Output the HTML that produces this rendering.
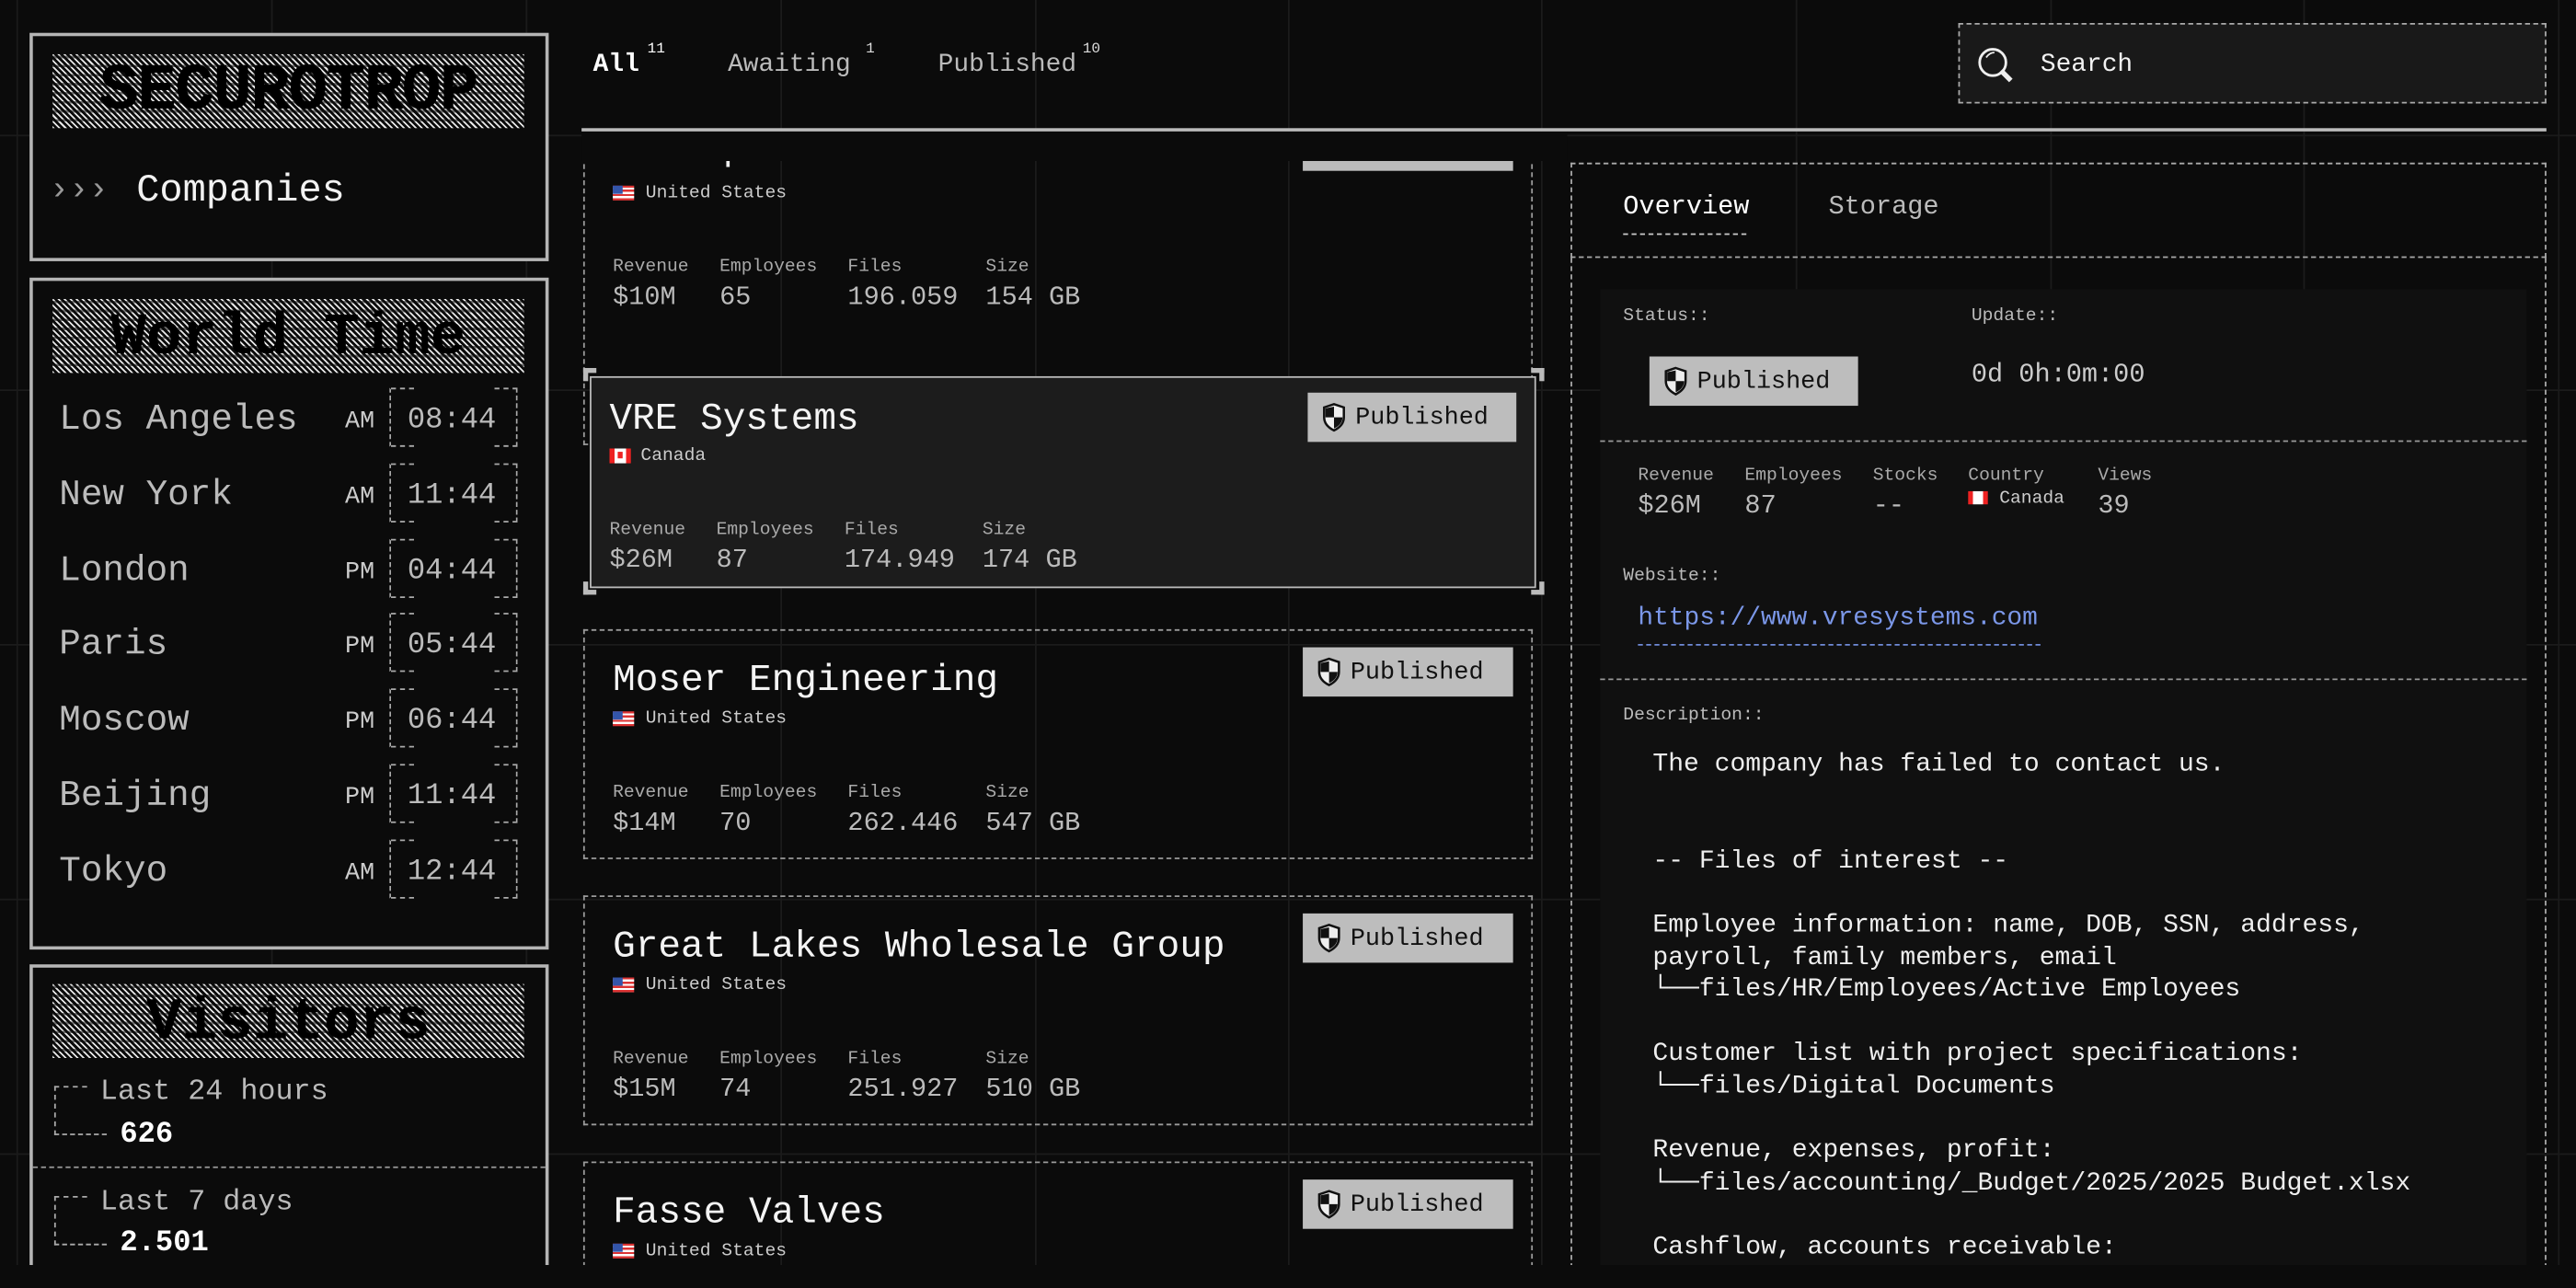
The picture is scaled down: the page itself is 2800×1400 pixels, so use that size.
<!DOCTYPE html>
<html><head><meta charset="utf-8">
<style>
*{margin:0;padding:0;box-sizing:border-box}
html,body{width:2800px;height:1400px;overflow:hidden;background:#0b0b0b}
#w{position:absolute;left:0;top:0;width:1568px;height:784px;transform:scale(1.785714);transform-origin:0 0;font-family:"Liberation Mono",monospace;color:#bbb;background:#0b0b0b;overflow:hidden}
.a{position:absolute;line-height:1;white-space:pre}
.a[style*="font-size"],.a.lab,.a.val{margin-top:2px}
.vl{position:absolute;top:0;width:1px;height:784px;background:#1b1b1b}
.hl{position:absolute;left:0;height:1px;width:1568px;background:#1b1b1b}
.box{position:absolute;border:2px solid #b5b5b5}
.ban{position:absolute;height:45px;background:
repeating-linear-gradient(0deg,transparent 0 4px,rgba(11,11,11,.55) 4px 5.5px),
repeating-linear-gradient(45deg,#e8e8e8 0 1px,#0b0b0b 1px 2.6px);display:flex;align-items:center;justify-content:center;color:#000;font-weight:bold;padding-top:2px}
.card{position:absolute;left:355px;width:578px;border:1px dashed #9a9a9a}
.badge{position:absolute;background:#bdbdbd;color:#111;font-size:15px;height:30px;display:flex;align-items:center;padding-left:9px;gap:6px}
.lab{font-size:11px;color:#aaa}
.val{font-size:16px;color:#bbb}
.tb{position:absolute;width:78px;height:36px;border:1px dashed #aaa;border-top-color:transparent;border-bottom-color:transparent}
.tb:before,.tb:after{content:"";position:absolute;left:0;right:0;height:0}
.tb:before{top:-1px;border-top:1px dashed #aaa;left:0;width:14px}
.tb:after{bottom:-1px;border-bottom:1px dashed #aaa;width:14px}
.tbr1,.tbr2{position:absolute;right:-1px;width:14px;height:0;border-top:1px dashed #aaa}
.tbr1{top:-1px}.tbr2{bottom:-1px}
.desc{font-size:15.7px;color:#eee}
</style></head><body><div id="w">
<!-- grid -->
<div class="vl" style="left:10px"></div><div class="vl" style="left:165px"></div><div class="vl" style="left:320px"></div><div class="vl" style="left:475px"></div><div class="vl" style="left:630px"></div><div class="vl" style="left:784px"></div><div class="vl" style="left:938px"></div><div class="vl" style="left:1093px"></div><div class="vl" style="left:1248px"></div><div class="vl" style="left:1402px"></div><div class="vl" style="left:1557px"></div>
<div class="hl" style="top:82px"></div><div class="hl" style="top:237px"></div><div class="hl" style="top:392px"></div><div class="hl" style="top:547px"></div><div class="hl" style="top:702px"></div>

<!-- logo box -->
<div class="box" style="left:18px;top:20px;width:316px;height:139px;background:#0b0b0b"></div>
<div class="ban" style="left:32px;top:33px;width:287px;font-size:40px;letter-spacing:-1px">SECUROTROP</div>
<div class="a" style="left:30px;top:105px;font-size:20px;color:#999">›››</div>
<div class="a" style="left:83px;top:103px;font-size:23.5px;color:#f2f2f2">Companies</div>

<!-- world time -->
<div class="box" style="left:18px;top:169px;width:316px;height:409px;background:#0b0b0b"></div>
<div class="ban" style="left:32px;top:182px;width:287px;font-size:36px">World Time</div>
<div id="wt"></div>

<!-- visitors -->
<div class="box" style="left:18px;top:587px;width:316px;height:210px;background:#0b0b0b"></div>
<div class="ban" style="left:32px;top:599px;width:287px;font-size:36px">Visitors</div>
<div class="a" style="left:33px;top:661px;width:20px;height:30px;border-left:1px dashed #aaa;border-top:1px dashed #aaa"></div>
<div class="a" style="left:33px;top:690px;width:32px;border-top:1px dashed #aaa"></div>
<div class="a" style="left:61px;top:655px;font-size:17.8px;color:#bbb">Last 24 hours</div>
<div class="a" style="left:73px;top:680px;font-size:18px;color:#fff;font-weight:bold">626</div>
<div class="a" style="left:20px;top:710px;width:312px;border-top:1px dashed #999"></div>
<div class="a" style="left:33px;top:728px;width:20px;height:30px;border-left:1px dashed #aaa;border-top:1px dashed #aaa"></div>
<div class="a" style="left:33px;top:757px;width:32px;border-top:1px dashed #aaa"></div>
<div class="a" style="left:61px;top:722px;font-size:17.8px;color:#bbb">Last 7 days</div>
<div class="a" style="left:73px;top:746px;font-size:18px;color:#fff;font-weight:bold">2.501</div>

<!-- cards -->
<div class="card" style="top:90px;height:181px;border-top:none"></div>
<div class="a" style="left:371px;top:78px;font-size:23px;color:#eee">Nuuamp ..</div>
<div class="a" style="left:354px;top:80px;width:600px;height:18px;background:#0b0b0b"></div>
<div class="a" style="left:793px;top:98px;width:128px;height:6px;background:#bbb"></div>
<div id="cards"></div>

<!-- tabs -->
<div class="a" style="left:361px;top:30px;font-size:15.6px;color:#fff;font-weight:bold">All</div>
<div class="a" style="left:394px;top:24px;font-size:9px;color:#fff">11</div>
<div class="a" style="left:443px;top:30px;font-size:15.6px;color:#bbb">Awaiting</div>
<div class="a" style="left:527px;top:24px;font-size:9px;color:#ddd">1</div>
<div class="a" style="left:571px;top:30px;font-size:15.6px;color:#bbb">Published</div>
<div class="a" style="left:659px;top:24px;font-size:9px;color:#ddd">10</div>
<div class="a" style="left:354px;top:78px;width:1196px;height:2px;background:#bbb"></div>

<!-- search -->
<div class="a" style="left:1192px;top:14px;width:358px;height:49px;border:1px dashed #aaa;background:#191919"></div>
<svg class="a" style="left:1202px;top:27px" width="26" height="26" viewBox="0 0 26 26"><circle cx="11" cy="11" r="8" fill="none" stroke="#eee" stroke-width="1.6"/><path d="M16 16 L22 22" stroke="#eee" stroke-width="3"/><path d="M7 8 Q9 5 12 5" stroke="#eee" fill="none" stroke-width="1"/></svg>
<div class="a" style="left:1242px;top:30px;font-size:15.6px;color:#f2f2f2">Search</div>

<!-- right panel -->
<div class="a" style="left:956px;top:99px;width:594px;height:58px;border:1px dashed #aaa"></div>
<div class="a" style="left:956px;top:157px;width:594px;height:640px;border-left:1px dashed #aaa;border-right:1px dashed #aaa"></div>
<div class="a" style="left:988px;top:116px;font-size:16px;color:#fff">Overview</div>
<div class="a" style="left:988px;top:142px;width:75px;border-top:1px dashed #ccc"></div>
<div class="a" style="left:1113px;top:116px;font-size:16px;color:#bbb">Storage</div>
<div class="a" style="left:974px;top:176px;width:564px;height:620px;background:#101010"></div>
<div class="a" style="left:988px;top:186px;font-size:11px;color:#bbb">Status::</div>
<div class="a" style="left:1200px;top:186px;font-size:11px;color:#bbb">Update::</div>
<div class="badge" style="left:1004px;top:217px;width:127px"><svg width="14" height="18" viewBox="0 0 14 18"><path d="M7 1 L13 3 V9 Q13 14 7 17 Q1 14 1 9 V3 Z" fill="#eee" stroke="#111" stroke-width="1.4"/><path d="M7 2.5 V9 H1.8 V3.6 Z M7 9 H12.2 Q12 13.5 7 15.8 Z" fill="#111"/></svg><span>Published</span></div>
<div class="a" style="left:1200px;top:218px;font-size:16px;color:#ccc">0d 0h:0m:00</div>
<div class="a" style="left:974px;top:268px;width:564px;border-top:1px dashed #999"></div>
<div class="a lab" style="left:997px;top:283px">Revenue</div><div class="a val" style="left:997px;top:298px">$26M</div>
<div class="a lab" style="left:1062px;top:283px">Employees</div><div class="a val" style="left:1062px;top:298px">87</div>
<div class="a lab" style="left:1140px;top:283px">Stocks</div><div class="a val" style="left:1140px;top:298px">--</div>
<div class="a lab" style="left:1198px;top:283px">Country</div>
<div class="a" style="left:1198px;top:299px;width:12px;height:8px;background:linear-gradient(90deg,#e22 0 3px,#fff 3px 9px,#e22 9px)"></div>
<div class="a lab" style="left:1217px;top:297px;color:#ccc">Canada</div>
<div class="a lab" style="left:1277px;top:283px">Views</div><div class="a val" style="left:1277px;top:298px">39</div>
<div class="a" style="left:988px;top:344px;font-size:11px;color:#bbb">Website::</div>
<div class="a" style="left:997px;top:367px;font-size:15.6px;color:#7b97e8">https://www.vresystems.com</div>
<div class="a" style="left:997px;top:392px;width:245px;border-top:1px dashed #6f8ad8"></div>
<div class="a" style="left:974px;top:413px;width:564px;border-top:1px dashed #999"></div>
<div class="a" style="left:988px;top:429px;font-size:11px;color:#bbb">Description::</div>
<div class="a desc" style="left:1006px;top:456px;line-height:19.6px">The company has failed to contact us.


-- Files of interest --

Employee information: name, DOB, SSN, address,
payroll, family members, email
└──files/HR/Employees/Active Employees

Customer list with project specifications:
└──files/Digital Documents

Revenue, expenses, profit:
└──files/accounting/_Budget/2025/2025 Budget.xlsx

Cashflow, accounts receivable:</div>
<div class="a" style="left:0;top:770px;width:1568px;height:14px;background:#0b0b0b"></div>
</div>
<script>
var wt=document.getElementById('wt'),h='';
[["Los Angeles","AM","08:44"],["New York","AM","11:44"],["London","PM","04:44"],["Paris","PM","05:44"],["Moscow","PM","06:44"],["Beijing","PM","11:44"],["Tokyo","AM","12:44"]].forEach(function(r,i){
var c=254+i*45.8;
h+='<div class="a" style="left:36px;top:'+(c-11)+'px;font-size:22px;color:#bbb">'+r[0]+'</div>';
h+='<div class="a" style="left:210px;top:'+(c-7)+'px;font-size:15px;color:#ccc">'+r[1]+'</div>';
h+='<div class="tb" style="left:237px;top:'+(c-18)+'px"><i class="tbr1"></i><i class="tbr2"></i></div>';
h+='<div class="a" style="left:248px;top:'+(c-9)+'px;font-size:18px;color:#bbb">'+r[2]+'</div>';
});
wt.innerHTML=h;
var us='<div class="a" style="left:0;top:0;width:13px;height:9px;background:repeating-linear-gradient(0deg,#d33 0 1.3px,#fff 1.3px 2.6px)"><div style="width:6px;height:5px;background:#35a"></div></div>';
var ca='<div class="a" style="left:0;top:0;width:13px;height:9px;background:linear-gradient(90deg,#e22 0 3px,#fff 3px 10px,#e22 10px)"><div style="position:absolute;left:5px;top:2px;width:3px;height:4px;background:#e22"></div></div>';
var shield='<svg width="14" height="18" viewBox="0 0 14 18"><path d="M7 1 L13 3 V9 Q13 14 7 17 Q1 14 1 9 V3 Z" fill="#eee" stroke="#111" stroke-width="1.4"/><path d="M7 2.5 V9 H1.8 V3.6 Z M7 9 H12.2 Q12 13.5 7 15.8 Z" fill="#111"/></svg>';
function stats(x,y,v){var xs=[0,65,143,227],L=["Revenue","Employees","Files","Size"],s='';
for(var i=0;i<4;i++){s+='<div class="a lab" style="left:'+(x+xs[i])+'px;top:'+(y-6)+'px">'+L[i]+'</div><div class="a val" style="left:'+(x+xs[i])+'px;top:'+(y+9)+'px">'+v[i]+'</div>';}return s;}
var c='';
c+=stats(373,162,["$10M","65","196.059","154 GB"]);
c+='<div class="a" style="left:373px;top:113px">'+us+'</div><div class="a lab" style="left:393px;top:111px;color:#ccc">United States</div>';
c+='<div class="a" style="left:359px;top:229px;width:576px;height:129px;background:#1c1c1c;border:1.5px solid #bbb"></div>';
[[355,224,'border-left:3px solid #bbb;border-top:3px solid #bbb'],[932,224,'border-right:3px solid #bbb;border-top:3px solid #bbb'],[355,354,'border-left:3px solid #bbb;border-bottom:3px solid #bbb'],[932,354,'border-right:3px solid #bbb;border-bottom:3px solid #bbb']].forEach(function(b){c+='<div class="a" style="left:'+b[0]+'px;top:'+b[1]+'px;width:8px;height:8px;'+b[2]+'"></div>';});
c+='<div class="a" style="left:371px;top:242px;font-size:23px;color:#f4f4f4">VRE Systems</div>';
c+='<div class="a" style="left:371px;top:273px">'+ca+'</div><div class="a lab" style="left:390px;top:271px;color:#ccc">Canada</div>';
c+='<div class="badge" style="left:796px;top:239px;width:127px">'+shield+'<span>Published</span></div>';
c+=stats(371,322,["$26M","87","174.949","174 GB"]);
[[383,"Moser Engineering",["$14M","70","262.446","547 GB"]],[545,"Great Lakes Wholesale Group",["$15M","74","251.927","510 GB"]],[707,"Fasse Valves",null]].forEach(function(k){
var t=k[0];c+='<div class="card" style="top:'+t+'px;height:'+(k[2]?140:100)+'px"></div>';
c+='<div class="a" style="left:373px;top:'+(t+18)+'px;font-size:23px;color:#f4f4f4">'+k[1]+'</div>';
c+='<div class="a" style="left:373px;top:'+(t+50)+'px">'+us+'</div><div class="a lab" style="left:393px;top:'+(t+48)+'px;color:#ccc">United States</div>';
c+='<div class="badge" style="left:793px;top:'+(t+11)+'px;width:128px">'+shield+'<span>Published</span></div>';
if(k[2])c+=stats(373,t+99,k[2]);
});
document.getElementById('cards').innerHTML=c;
</script>
</body></html>
